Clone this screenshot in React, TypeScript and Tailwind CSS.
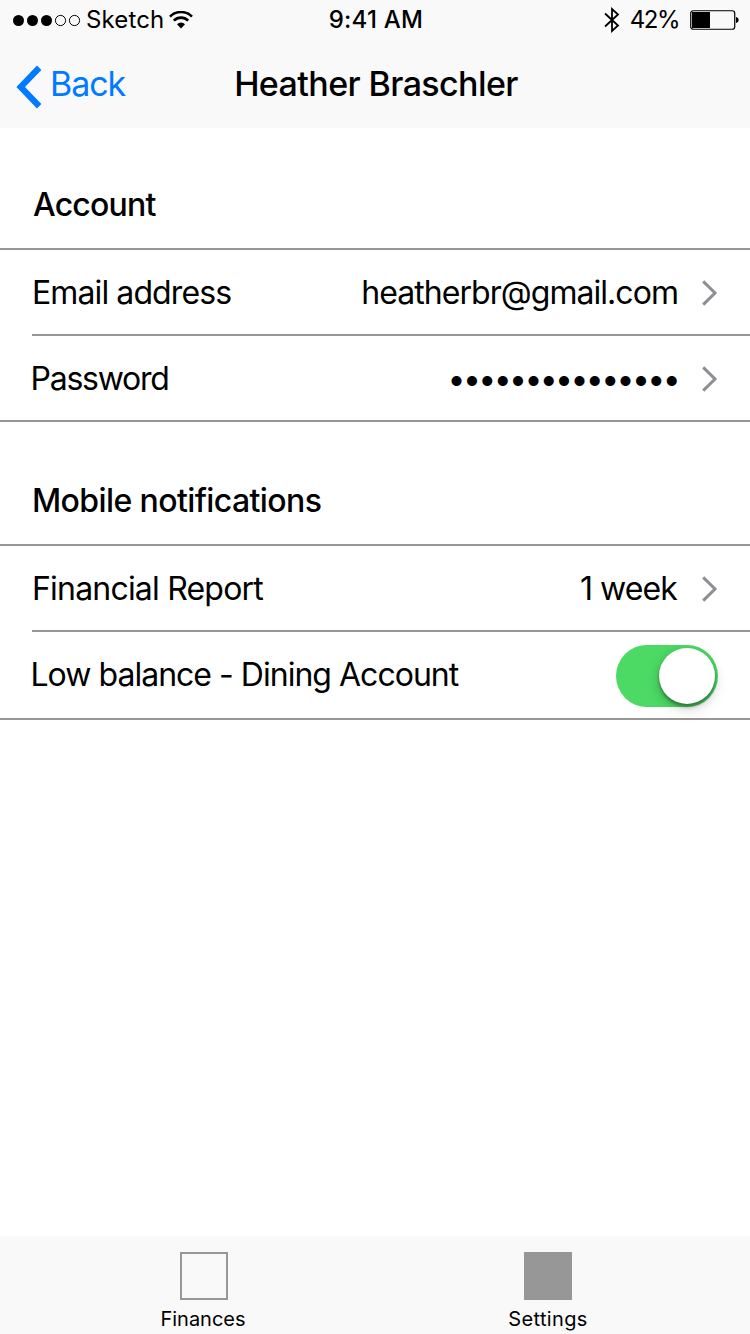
import type { ReactNode } from "react";

function Chevron() {
  return (
    <svg width="16" height="26" viewBox="0 0 16 26" fill="none" className="shrink-0">
      <path d="M1.2 1.4 L13 13 L1.2 24.6" stroke="#8e8e93" strokeWidth="3" />
    </svg>
  );
}

function StatusBar() {
  return (
    <div className="grid h-10 grid-cols-3 items-center text-[24px] leading-10">
      <div className="flex h-10 items-center pl-3">
        <svg width="69" height="14" viewBox="0 0 69 14" className="mt-px shrink-0">
          {[6.5, 20.5, 34.5].map((cx) => (
            <circle key={cx} cx={cx} cy="6.5" r="5.5" fill="#000" />
          ))}
          {[48.5, 62.5].map((cx) => (
            <circle key={cx} cx={cx} cy="6.5" r="5.1" fill="none" stroke="#000" />
          ))}
        </svg>
        <span className="ml-[5px] tracking-[0.15px]">Sketch</span>
        <svg width="24" height="18" viewBox="0 0 24 18" fill="none" stroke="#000" className="ml-[5px] shrink-0">
          <path d="M1 5.6 A15.5 15.5 0 0 1 23 5.6" strokeWidth="2.6" />
          <path d="M4.8 9.6 A10.2 10.2 0 0 1 19.2 9.6" strokeWidth="2.6" />
          <path d="M8 13.2 A5.6 5.6 0 0 1 16 13.2 L12 17.4 Z" fill="#000" stroke="none" />
        </svg>
      </div>
      <div className="pl-[2px] text-center font-medium tracking-[0.25px]">9:41 AM</div>
      <div className="flex h-10 items-center justify-end pr-[10px]">
        <svg width="16" height="26" viewBox="0 0 16 26" fill="none" stroke="#000" strokeWidth="1.8" className="shrink-0">
          <path d="M1 6.5 L14 18.5 L8 24 V2 L14 7.5 L1 19.5" />
        </svg>
        <span className="ml-[10px] -mr-px tracking-[-1.5px]">42%</span>
        <svg width="50" height="20" viewBox="0 0 50 20" className="ml-3 shrink-0">
          <rect x="0.75" y="0.75" width="44" height="18.5" rx="2.5" fill="none" stroke="#000" strokeWidth="1.2" />
          <rect x="2" y="2" width="18" height="16" fill="#000" />
          <path d="M46 7 C49.5 7.5 49.5 12.5 46 13 Z" fill="#000" />
        </svg>
      </div>
    </div>
  );
}

function NavBar() {
  return (
    <div className="grid h-[88px] grid-cols-[1fr_auto_1fr] items-center text-[34px] leading-[88px]">
      <div className="flex items-center pl-4 text-[#007aff]">
        <svg width="26" height="44" viewBox="0 0 26 44" className="mt-[5px] shrink-0">
          <path d="M21 0.6 L25.4 5 L9 22 L25.4 39 L21 43.4 L0.4 22 Z" fill="#007aff" />
        </svg>
        <span className="ml-2 tracking-[-1.1px]">Back</span>
      </div>
      <h1 className="pl-[2px] font-medium tracking-[-0.6px]">Heather Braschler</h1>
      <div />
    </div>
  );
}

function Row({ children, className }: { children: ReactNode; className: string }) {
  return <div className={`flex items-center justify-between border-[#979797] pr-8 ${className}`}>{children}</div>;
}

export default function App() {
  return (
    <div className="flex h-[1334px] w-[750px] flex-col bg-white font-['Inter',sans-serif] text-black">
      <header className="bg-[#f9f9f9]">
        <StatusBar />
        <NavBar />
      </header>

      <main className="flex-1 text-[32px] leading-10">
        <section>
          <h2 className="h-[122px] border-b-2 border-[#979797] pt-[57px] pl-[33px] font-medium tracking-[-0.8px]">
            Account
          </h2>
          <Row className="ml-8 h-[86px] border-b-2 pt-[2px]">
            <span className="tracking-[-0.9px]">Email address</span>
            <div className="flex items-center gap-6">
              <span className="tracking-[-0.95px]">heatherbr@gmail.com</span>
              <Chevron />
            </div>
          </Row>
          <Row className="h-[86px] border-b-2 pt-[2px] pl-[31px]">
            <span className="-ml-[0.5px] tracking-[-1.25px]">Password</span>
            <div className="flex items-center gap-6">
              <span className="tracking-[-2.64px]">•••••••••••••••</span>
              <Chevron />
            </div>
          </Row>
        </section>

        <section>
          <h2 className="h-[124px] border-b-2 border-[#979797] pt-[59px] pl-8 font-medium tracking-[-0.6px]">
            Mobile notifications
          </h2>
          <Row className="ml-8 h-[86px] border-b-2 pt-[2px]">
            <span className="tracking-[-0.8px]">Financial Report</span>
            <div className="flex items-center gap-6">
              <span className="mr-px tracking-[-0.9px]">1 week</span>
              <Chevron />
            </div>
          </Row>
          <Row className="h-[88px] border-b-2 pl-[31px]">
            <span className="-ml-[0.5px] tracking-[-0.98px]">Low balance - Dining Account</span>
            <button
              role="switch"
              aria-checked="true"
              className="mt-[2px] flex h-[62px] w-[102px] items-center justify-end rounded-full bg-[#4cd964] pr-[3px]"
            >
              <span className="h-14 w-14 rounded-full bg-white shadow-[0_3px_3px_rgba(0,0,0,0.3),0_3px_8px_rgba(0,0,0,0.15),0_6px_16px_rgba(0,0,0,0.1)]" />
            </button>
          </Row>
        </section>
      </main>

      <nav className="flex h-[98px] bg-[#f9f9f9] text-[20px] leading-6">
        <div className="flex w-[406px] flex-col items-center pt-4">
          <span className="ml-[2px] h-12 w-12 border-2 border-[#979797]" />
          <span className="mt-[7px] tracking-[0px]">Finances</span>
        </div>
        <div className="flex w-[284px] flex-col items-center pt-4">
          <span className="h-12 w-12 bg-[#979797]" />
          <span className="mt-[7px] tracking-[0.35px]">Settings</span>
        </div>
      </nav>
    </div>
  );
}
